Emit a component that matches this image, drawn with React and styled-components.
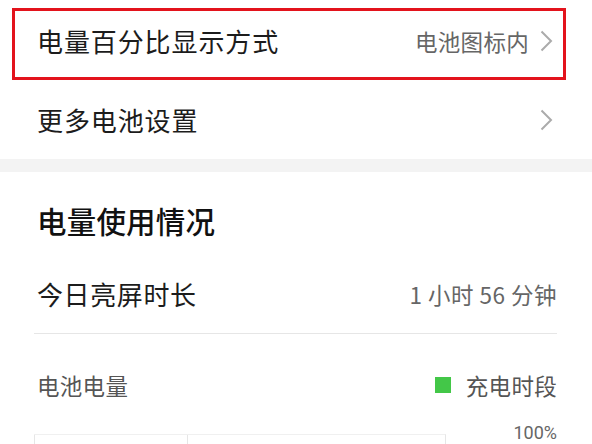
import React from "react";
import styled, { createGlobalStyle, css } from "styled-components";

const Global = createGlobalStyle`
  html, body { margin: 0; padding: 0; background: #fff; }
  body { font-family: "Noto Sans CJK SC", "Noto Sans", sans-serif; -webkit-font-smoothing: antialiased; }
  * { box-sizing: border-box; }
`;

const Page = styled.div`
  width: 592px;
  height: 444px;
  overflow: hidden;
  background: #fff;
`;

const Row = styled.div`
  position: relative;
  height: ${(p) => p.$h}px;
  padding: ${(p) => p.$pt || 0}px 39px 0 37px;
  display: flex;
  align-items: center;
  justify-content: space-between;
  ${(p) =>
    p.$highlighted &&
    css`
      &::after {
        content: "";
        position: absolute;
        left: 12px;
        right: 26px;
        top: 8px;
        bottom: 0;
        border: 3px solid #e3131c;
        pointer-events: none;
      }
    `}
`;

const Label = styled.span`
  font-size: 26px;
  color: #1c1c1c;
  letter-spacing: 0.9px;
  line-height: 36px;
`;

const Right = styled.span`
  display: flex;
  align-items: center;
  gap: 11px;
`;

const Value = styled.span`
  font-size: 22.5px;
  color: #666;
  letter-spacing: 0.3px;
  line-height: 32px;
`;

const Band = styled.div`
  height: 13px;
  background: #f3f3f3;
`;

const Section = styled.div`
  padding: 0 35px 0 37px;
`;

const Title = styled.h2`
  margin: 0;
  padding-top: 28px;
  font-size: 29.5px;
  line-height: 40px;
  font-weight: 500;
  color: #111;
  letter-spacing: 0.2px;
`;

const StatRow = styled.div`
  display: flex;
  justify-content: space-between;
  align-items: center;
  padding: 36px 0 21px;
  border-bottom: 1px solid #e6e6e6;
  margin-left: -3px;
  padding-left: 3px;
`;

const StatLabel = styled.span`
  font-size: 26px;
  line-height: 36px;
  color: #1c1c1c;
  letter-spacing: 0.6px;
`;

const StatValue = styled.span`
  font-size: 22.5px;
  line-height: 36px;
  color: #666;
  letter-spacing: 0.5px;
`;

const LegendRow = styled.div`
  display: flex;
  justify-content: space-between;
  align-items: center;
  padding-top: 33px;
  height: 69px;
`;

const SubLabel = styled.span`
  font-size: 22.5px;
  line-height: 36px;
  color: #555;
  letter-spacing: 0.3px;
`;

const Legend = styled.span`
  display: flex;
  align-items: center;
  gap: 15px;
`;

const Swatch = styled.span`
  width: 16px;
  height: 16px;
  background: #43c748;
`;

const ChartRow = styled.div`
  display: flex;
  align-items: flex-start;
  margin-top: 20px;
  margin-left: -3px;
`;

const Chart = styled.div`
  width: 412px;
  margin-top: 11px;
  display: flex;
  border-top: 1px solid #f0f0f0;
  border-right: 1px solid #e6e6e6;
  height: 40px;
`;

const ChartCol = styled.div`
  width: ${(p) => p.$w}px;
  border-left: 1px solid #e6e6e6;
`;

const AxisLabel = styled.span`
  margin-left: auto;
  font-family: Roboto, "Noto Sans", sans-serif;
  font-size: 18px;
  line-height: 20px;
  color: #666;
`;

const Chevron = () => (
  <svg width="13" height="22" viewBox="0 0 13 22">
    <polyline points="1.5,1.5 11,11 1.5,20.5" fill="none" stroke="#ababab" strokeWidth="2" />
  </svg>
);

export default function App() {
  return (
    <Page>
      <Global />
      <Row $h={80} $pt={2} $highlighted>
        <Label>电量百分比显示方式</Label>
        <Right>
          <Value>电池图标内</Value>
          <Chevron />
        </Right>
      </Row>
      <Row $h={79}>
        <Label>更多电池设置</Label>
        <Right>
          <Chevron />
        </Right>
      </Row>
      <Band />
      <Section>
        <Title>电量使用情况</Title>
        <StatRow>
          <StatLabel>今日亮屏时长</StatLabel>
          <StatValue>1 小时 56 分钟</StatValue>
        </StatRow>
        <LegendRow>
          <SubLabel>电池电量</SubLabel>
          <Legend>
            <Swatch />
            <SubLabel>充电时段</SubLabel>
          </Legend>
        </LegendRow>
        <ChartRow>
          <Chart>
            <ChartCol $w={153} />
            <ChartCol $w={258} />
          </Chart>
          <AxisLabel>100%</AxisLabel>
        </ChartRow>
      </Section>
    </Page>
  );
}
